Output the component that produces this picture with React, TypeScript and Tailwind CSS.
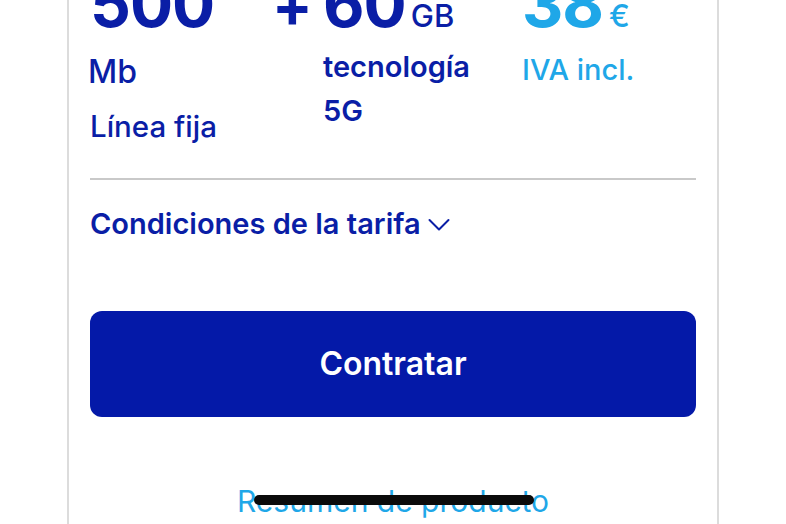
export default function App() {
  return (
    <div
      className="w-[786px] h-[524px] overflow-hidden bg-white relative"
      style={{ fontFamily: "Inter, 'Noto Sans', sans-serif" }}
    >
      {/* Card, scrolled so its top is out of view */}
      <div className="ml-[67px] w-[652px] h-[600px] border-x-2 border-[#dcdcdc] px-[21px] mt-[-28px]">
        {/* Tariff figures */}
        <div className="flex">
          <div className="w-[184px] text-[#0a1ea6]">
            <div className="text-[64px] font-bold leading-none tracking-[-1px]">500</div>
            <div className="text-[32px] font-medium leading-none mt-[20px] ml-[-2px]">Mb</div>
            <div className="text-[29.5px] font-medium leading-none mt-[24px]">Línea fija</div>
          </div>
          <div className="w-[248px] text-[#0a1ea6]">
            <div className="flex items-baseline leading-none">
              <span className="text-[60px] font-bold w-[49px] ml-[-2px]">+</span>
              <span className="text-[64px] font-bold tracking-[-1px] ml-[2px]">60</span>
              <span className="text-[31px] font-medium ml-[5px]">GB</span>
            </div>
            <div className="pl-[49px] text-[29px] font-semibold leading-[44px] mt-[9px]">
              tecnología
              <br />
              5G
            </div>
          </div>
          <div className="text-[#1fa7e8]">
            <div className="flex items-baseline leading-none">
              <span className="text-[64px] font-bold tracking-[-1px]">38</span>
              <span className="text-[31px] font-medium ml-[6px]">€</span>
            </div>
            <div className="text-[29px] font-medium leading-none mt-[19px]">IVA incl.</div>
          </div>
        </div>

        <div className="h-[2px] bg-[#c9c9c9] mt-[36px]" />

        {/* Conditions toggle */}
        <div className="flex items-center gap-[7px] mt-[22px] text-[#0a1ea6]">
          <span className="text-[29px] font-semibold">Condiciones de la tarifa</span>
          <svg width="22" height="14" viewBox="0 0 22 14" fill="none" className="mt-[3px]">
            <path d="M1.5 2 L11 11.5 L20.5 2" stroke="currentColor" strokeWidth="2" strokeLinecap="round" strokeLinejoin="round" />
          </svg>
        </div>

        <button className="mt-[66px] w-full h-[106px] rounded-[12px] bg-[#0419a8] text-white text-[32px] font-semibold">
          Contratar
        </button>

        <div className="mt-[69px] text-center text-[30px] text-[#1fa7e8] leading-none">
          Resumen de producto
        </div>
      </div>

      {/* Home indicator over the page */}
      <div className="absolute left-[254px] top-[495px] w-[280px] h-[10px] rounded-full bg-[#0b0b0b]" />
    </div>
  );
}
